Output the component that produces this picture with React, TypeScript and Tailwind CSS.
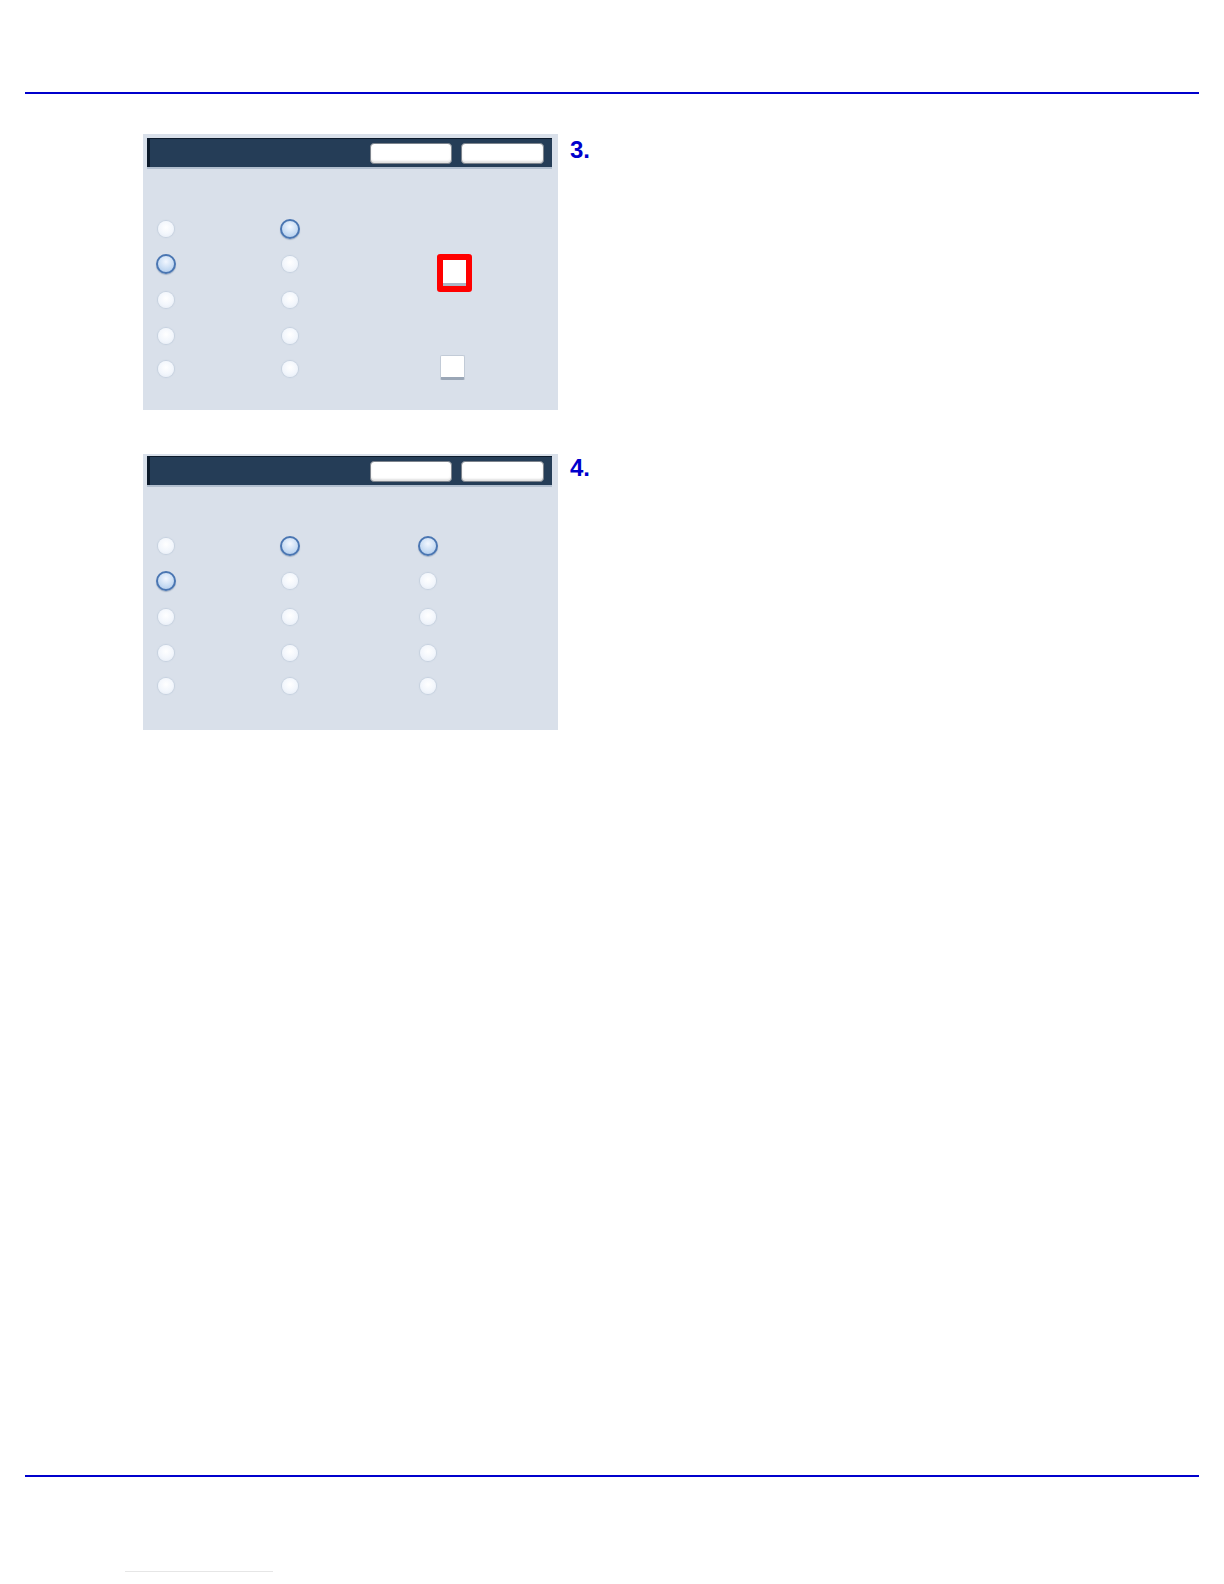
import React from 'react';

// radio dot: selected ones are larger with a blue ring
function Radio({ on }: { on?: boolean }) {
  if (on) {
    return (
      <span className="block w-[20px] h-[20px] rounded-full border-2 border-[#4a76b2] bg-[radial-gradient(circle_at_50%_35%,#f2f7ff_0%,#c6dbf3_60%,#a9c5ea_100%)] shadow-[0_1px_1px_rgba(60,90,130,0.35)]" />
    );
  }
  return (
    <span className="block w-[16px] h-[16px] rounded-full bg-[radial-gradient(circle_at_50%_40%,#ffffff_0%,#f2f6fc_55%,#e2e9f3_100%)] shadow-[0_0_1px_1px_rgba(190,202,218,0.7)]" />
  );
}

function Cell({ children, ml = '' }: { children: React.ReactNode; ml?: string }) {
  return <div className={`w-[24px] flex items-center justify-center ${ml}`}>{children}</div>;
}

const rowHeights = ['h-[34px]', 'h-[36px]', 'h-[36px]', 'h-[36px]', 'h-[30px]'];

function Header({ top }: { top: string }) {
  return (
    <>
      <div className={`${top} pl-[4px] pr-[6px]`}>
        <div className="h-[29px] bg-[#253d57] border-l-[3px] border-t-[1px] border-[#0c1a2b] flex items-center justify-end gap-[9px] pr-[8px]">
          <div className="w-[82px] h-[21px] bg-white rounded-[4px] border-[1.5px] border-[#7d848d] shadow-[inset_0_-2px_2px_rgba(0,0,0,0.12)]" />
          <div className="w-[83px] h-[21px] bg-white rounded-[4px] border-[1.5px] border-[#7d848d] shadow-[inset_0_-2px_2px_rgba(0,0,0,0.12)]" />
        </div>
      </div>
      <div className="h-[2px] ml-[4px] mr-[6px] bg-[#b2bfcf]" />
    </>
  );
}

function Panel({ cols, checks }: { cols: number[][]; checks?: boolean }) {
  // cols[row] = selected column indices in that row
  return (
    <div className="w-[415px] h-[276px] bg-[#d9e0ea] flex flex-col">
      <Header top={checks ? 'pt-[4px]' : 'pt-[2px]'} />
      <div className="flex">
        <div className={`pl-[11px] ${checks ? 'pt-[43px]' : 'pt-[42px]'} flex flex-col`}>
          {rowHeights.map((h, r) => (
            <div key={r} className={`flex items-center ${h}`}>
              <Cell>
                <Radio on={cols[r].includes(0)} />
              </Cell>
              <Cell ml="ml-[100px]">
                <Radio on={cols[r].includes(1)} />
              </Cell>
              {!checks && (
                <Cell ml="ml-[114px]">
                  <Radio on={cols[r].includes(2)} />
                </Cell>
              )}
            </div>
          ))}
        </div>
        {checks && (
          <div className="ml-[135px] pt-[85px] flex flex-col">
            <div className="w-[35px] h-[38px] border-[6px] border-[#ff0000] rounded-[3px]">
              <div className="w-full h-full bg-white border-b-[3px] border-[#aab6c6]" />
            </div>
            <div className="mt-[63px] ml-[3px] w-[25px] h-[25px] bg-white rounded-[2px] border border-[#c2cbd7] border-b-[3px] border-b-[#9aa6b6]" />
          </div>
        )}
      </div>
    </div>
  );
}

function Step({ n, mt, children }: { n: string; mt: string; children: React.ReactNode }) {
  return (
    <div className="flex items-start">
      {children}
      <div className={`ml-[12px] ${mt} text-[24px] leading-[24px] font-bold text-[#0000cc] font-['Liberation_Sans',Arial,sans-serif]`}>
        {n}
      </div>
    </div>
  );
}

export default function App() {
  return (
    <div className="w-[1224px] h-[1584px] bg-white flex flex-col pt-[92px] font-['Liberation_Sans',Arial,sans-serif]">
      <div className="ml-[25px] w-[1174px] h-[2px] bg-[#0000cc]" />

      <div className="pl-[143px] mt-[40px] flex flex-col gap-[44px]">
        <Step n="3." mt="mt-[4px]">
          <Panel checks cols={[[1], [0], [], [], []]} />
        </Step>
        <Step n="4." mt="mt-[2px]">
          <Panel cols={[[1, 2], [0], [], [], []]} />
        </Step>
      </div>

      <div className="ml-[25px] mt-[745px] w-[1174px] h-[2px] bg-[#0000cc]" />
      <div className="ml-[125px] mt-[94px] w-[148px] h-px bg-[#e6e6e6]" />
    </div>
  );
}
